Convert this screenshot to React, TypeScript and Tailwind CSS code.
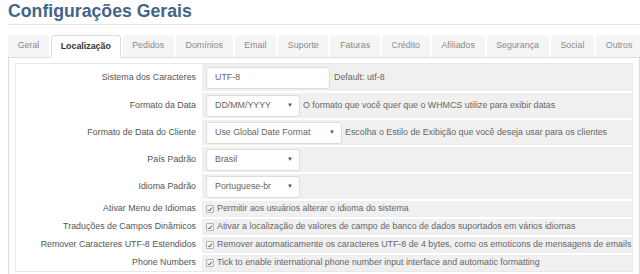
import React from 'react';

const tabs = [
  'Geral',
  'Localização',
  'Pedidos',
  'Domínios',
  'Email',
  'Suporte',
  'Faturas',
  'Crédito',
  'Afiliados',
  'Segurança',
  'Social',
  'Outros',
];

function Select({ value, width }: { value: string; width: string }) {
  return (
    <div
      className={`${width} h-[22px] bg-white border border-[#dcdcdc] rounded-[3px] flex items-center justify-between pl-[8px] pr-[6px] text-[#666]`}
    >
      <span>{value}</span>
      <span className="text-[6px] text-[#555]">▼</span>
    </div>
  );
}

function Check() {
  return (
    <span className="w-[8px] h-[8px] border border-[#b5b5b5] bg-[#f4f4f4] rounded-[1px] flex items-center justify-center">
      <svg width="7" height="7" viewBox="0 0 8 8">
        <path d="M1.5 4.2 L3.2 6 L6.6 1.6" stroke="#444" strokeWidth="1.3" fill="none" />
      </svg>
    </span>
  );
}

type Row = { label: string; tall?: boolean; content: React.ReactNode };

const rows: Row[] = [
  {
    label: 'Sistema dos Caracteres',
    tall: true,
    content: (
      <>
        <div className="w-[124px] h-[22px] bg-white border border-[#dcdcdc] rounded-[3px] flex items-center pl-[8px] text-[#666]">
          UTF-8
        </div>
        <span className="ml-[4px]">Default: utf-8</span>
      </>
    ),
  },
  {
    label: 'Formato da Data',
    tall: true,
    content: (
      <>
        <Select value="DD/MM/YYYY" width="w-[94px]" />
        <span className="ml-[3px]">O formato que você quer que o WHMCS utilize para exibir datas</span>
      </>
    ),
  },
  {
    label: 'Formato de Data do Cliente',
    tall: true,
    content: (
      <>
        <Select value="Use Global Date Format" width="w-[136px]" />
        <span className="ml-[3px]">Escolha o Estilo de Exibição que você deseja usar para os clientes</span>
      </>
    ),
  },
  { label: 'País Padrão', tall: true, content: <Select value="Brasil" width="w-[94px]" /> },
  { label: 'Idioma Padrão', tall: true, content: <Select value="Portuguese-br" width="w-[94px]" /> },
  {
    label: 'Ativar Menu de Idiomas',
    content: (
      <>
        <Check />
        <span className="ml-[3px]">Permitir aos usuários alterar o idioma do sistema</span>
      </>
    ),
  },
  {
    label: 'Traduções de Campos Dinâmicos',
    content: (
      <>
        <Check />
        <span className="ml-[3px]">Ativar a localização de valores de campo de banco de dados suportados em vários idiomas</span>
      </>
    ),
  },
  {
    label: 'Remover Caracteres UTF-8 Estendidos',
    content: (
      <>
        <Check />
        <span className="ml-[3px]">Remover automaticamente os caracteres UTF-8 de 4 bytes, como os emoticons de mensagens de emails</span>
      </>
    ),
  },
  {
    label: 'Phone Numbers',
    content: (
      <>
        <Check />
        <span className="ml-[3px]">Tick to enable international phone number input interface and automatic formatting</span>
      </>
    ),
  },
];

export default function App() {
  return (
    <div className="w-[640px] h-[274px] overflow-hidden bg-white font-['Liberation_Sans',Arial,sans-serif] text-[8.85px]">
      <h1 className="ml-[8px] pt-[2px] pb-[3px] text-[17.7px] leading-[19px] font-bold text-[#42648a] border-b border-[#e3e3e3]">
        Configurações Gerais
      </h1>

      <div className="ml-[8px] mt-[10px] flex gap-[2px] h-[23px] border-b border-[#ddd]">
        {tabs.map((t) =>
          t === 'Localização' ? (
            <div
              key={t}
              className="px-[8.7px] flex items-center bg-white border border-[#ddd] border-b-white -mb-px rounded-t-[3px] font-bold text-[#333]"
            >
              {t}
            </div>
          ) : (
            <div key={t} className="px-[9.7px] flex items-center bg-[#f5f5f5] text-[#8a8a8a] rounded-t-[3px]">
              {t}
            </div>
          )
        )}
      </div>

      <div className="ml-[8px] border-x border-[#ddd] px-[6px] pt-[5px] pb-[6px]">
        <div className="border border-[#e8e8e8]">
          {rows.map((r, i) => (
            <div
              key={r.label}
              className={`flex ${r.tall ? 'h-[27px]' : 'h-[18px]'} ${i > 0 ? 'border-t-2 border-white' : ''}`}
            >
              <div className="w-[186px] shrink-0 bg-white flex items-center justify-end pr-[6px] text-[#555]">
                {r.label}
              </div>
              <div className="flex-1 bg-[#f0f0f0] flex items-center pl-[4px] text-[#666] whitespace-nowrap">
                {r.content}
              </div>
            </div>
          ))}
        </div>
      </div>
    </div>
  );
}
